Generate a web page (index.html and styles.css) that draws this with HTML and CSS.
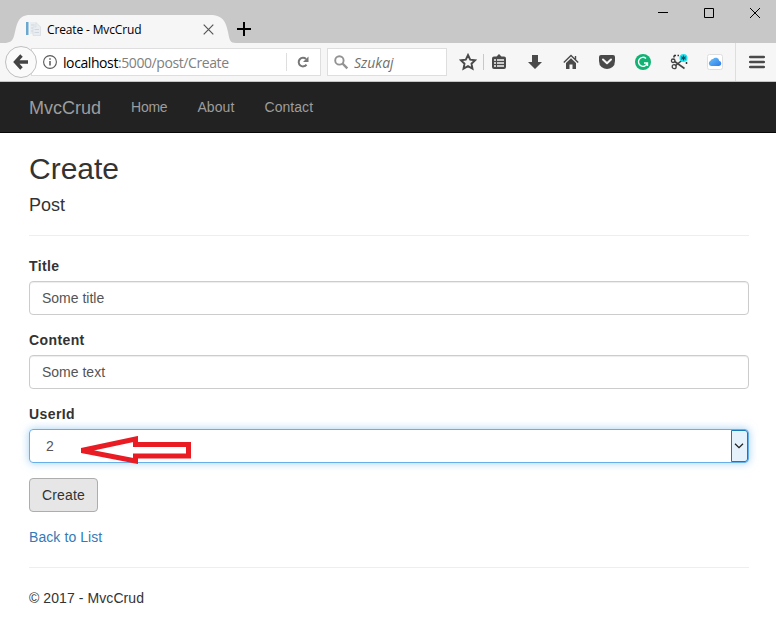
FILE: index.html
```html
<!DOCTYPE html>
<html lang="en">
<head>
<meta charset="utf-8">
<title>Create - MvcCrud</title>
<link rel="stylesheet" href="styles.css">
</head>
<body>
<div class="titlebar">
  <div class="tab">
    <svg class="tab-shape" width="232" height="28" viewBox="0 0 232 28"><path d="M0 28C6 28 8.500 26 10 21C13 10 13 0 26 0H206C219 0 222 7 224 17C225.500 25 226 28 232 28Z" fill="#f6f6f6"/></svg>
    <svg class="favicon" width="16" height="16" viewBox="0 0 16 16"><path d="M1 1H3.500V14H1Z" fill="#6ba8cf"/><path d="M5 1H10.500L15.500 5.500V14.500H8V13H5Z" fill="#e9edf1"/><path d="M6 4H9.500M6 7H8M6 10H8M9.500 8.500H14M9.500 11.500H14" stroke="#cfd7de"/><path d="M8 14.500V6H11V1.500L15.500 6V14.500Z" fill="none" stroke="#d5dbe0" stroke-width=".7"/></svg>
    <span class="tab-title">Create - MvcCrud</span>
    <svg class="tab-close" width="11" height="11" viewBox="0 0 11 11"><path d="M.7 .7L10.300 10.300M10.300 .7L.7 10.300" stroke="#555" stroke-width="1.200"/></svg>
  </div>
  <svg class="new-tab" width="14" height="14" viewBox="0 0 14 14"><path d="M7 0V14M0 7H14" stroke="#000" stroke-width="2"/></svg>
  <div class="window-controls">
    <svg width="10" height="10" viewBox="0 0 10 10"><path d="M0 4.500H10" stroke="#000"/></svg>
    <svg width="10" height="10" viewBox="0 0 10 10"><path d="M.5 .5H9.500V9.500H.5Z" fill="none" stroke="#000"/></svg>
    <svg width="10" height="10" viewBox="0 0 10 10"><path d="M0 0L10 10M10 0L0 10" stroke="#000"/></svg>
  </div>
</div>

<div class="toolbar">
  <div class="back"><svg width="16" height="16" viewBox="0 0 16 16"><path d="M8.500 1.500L2.500 8L8.500 14.500M3 8H15" fill="none" stroke="#444" stroke-width="3.400"/></svg></div>
  <div class="address">
    <svg width="14" height="14" viewBox="0 0 14 14"><circle cx="7" cy="7" r="6.400" fill="none" stroke="#5a5a5a" stroke-width="1.100"/><path d="M7 6V10.500M7 3.200V4.800" stroke="#5a5a5a" stroke-width="1.500"/></svg>
    <span class="url">localhost<span class="path">:5000/post/Create</span></span>
    <div class="reload"><svg width="12" height="12" viewBox="0 0 12 12"><path d="M9.500 8.600A4.300 4.300 0 1 1 9 3" fill="none" stroke="#777" stroke-width="2"/><path d="M11.500 .5V6H6Z" fill="#777"/></svg></div>
  </div>
  <div class="search">
    <svg width="15" height="15" viewBox="0 0 15 15"><circle cx="5.400" cy="5.400" r="4.200" fill="none" stroke="#929292" stroke-width="1.900"/><path d="M8.500 8.500L13.300 13.300" stroke="#929292" stroke-width="2.400"/></svg>
    <span>Szukaj</span>
  </div>
  <div class="icons">
    <div class="icon star"><svg width="18" height="18" viewBox="0 0 18 18"><path d="M9 2L11.200 6.600L16.200 7.200L12.500 10.700L13.500 15.700L9 13.200L4.500 15.700L5.500 10.700L1.800 7.200L6.800 6.600Z" fill="none" stroke="#4a4a4a" stroke-width="1.900"/></svg></div>
    <div class="icon clip"><svg width="16" height="16" viewBox="0 0 16 16"><path d="M3 2.500H5.500L8 0L10.500 2.500H13Q15 2.500 15 4.500V13Q15 15 13 15H3Q1 15 1 13V4.500Q1 2.500 3 2.500Z" fill="#4a4a4a"/><path d="M3 6H5M6 6H13M3 9H5M6 9H13M3 12H5M6 12H13" stroke="#f6f6f6" stroke-width="1.500"/></svg></div>
    <div class="icon"><svg width="16" height="16" viewBox="0 0 16 16"><path d="M5 1H11V8H15L8 15L1 8H5Z" fill="#4a4a4a"/></svg></div>
    <div class="icon"><svg width="16" height="16" viewBox="0 0 16 16"><path d="M.8 8.500L8 1.500L15.200 8.500M12.500 2V6" fill="none" stroke="#4a4a4a" stroke-width="1.400"/><path d="M3 9L8 4.300L13 9V15H9.500V10.500H6.500V15H3Z" fill="#4a4a4a"/></svg></div>
    <div class="icon"><svg width="16" height="16" viewBox="0 0 16 16"><path d="M2 1H14Q16 1 16 3V7Q16 11 13.500 13Q8 17 2.500 13Q0 11 0 7V3Q0 1 2 1Z" fill="#4a4a4a"/><path d="M4 5.500L8 9.300L12 5.500" fill="none" stroke="#f6f6f6" stroke-width="2" stroke-linecap="round" stroke-linejoin="round"/></svg></div>
    <div class="icon"><svg width="16" height="16" viewBox="0 0 16 16"><circle cx="8" cy="8" r="8" fill="#11b274"/><path d="M11 4.500A4.500 4.500 0 1 0 12.300 9H9M12.500 8.500V12" fill="none" stroke="#fff" stroke-width="1.400"/></svg></div>
    <div class="icon"><svg width="18" height="16" viewBox="0 0 18 16"><path d="M4 1.500H9M4 1.500V6M16.500 8V11" fill="none" stroke="#333" stroke-width="1.500" stroke-dasharray="2 1.500"/><path d="M4 7L14.500 14.500M5 12L13 5.500" stroke="#444" stroke-width="1.600"/><circle cx="3.200" cy="6.800" r="1.800" fill="none" stroke="#444" stroke-width="1.300"/><circle cx="4.200" cy="12.700" r="2" fill="none" stroke="#444" stroke-width="1.300"/><circle cx="13.500" cy="4" r="4" fill="#1de1ee"/><path d="M13.500 1.500V6.500M11.300 2.700L15.700 5.300M15.700 2.700L11.300 5.300" stroke="#124b60" stroke-width="1.100"/></svg></div>
    <div class="icon"><svg width="16" height="16" viewBox="0 0 16 16"><defs><linearGradient id="sky" x2="1" y2="1"><stop stop-color="#6bc3f8"/><stop offset="1" stop-color="#2d7bea"/></linearGradient></defs><rect x=".5" y=".5" width="15" height="15" rx="2" fill="#fff" stroke="#dedede"/><path d="M4.500 12A2.700 2.700 0 0 1 3.500 6.800A2.500 2.500 0 0 1 6 5A3.500 3.500 0 0 1 12.200 6.700A2.700 2.700 0 0 1 12 12Z" fill="url(#sky)"/></svg></div>
    <div class="icon menu"><svg width="16" height="14" viewBox="0 0 16 14"><path d="M1.200 2H14.800M1.200 7H14.800M1.200 12H14.800" stroke="#4a4a4a" stroke-width="2.600" stroke-linecap="round"/></svg></div>
  </div>
</div>

<nav class="navbar">
  <a class="brand">MvcCrud</a>
  <a>Home</a>
  <a class="about">About</a>
  <a class="contact">Contact</a>
</nav>

<main class="content">
  <h2>Create</h2>
  <h4>Post</h4>
  <hr>
  <form>
    <div class="group">
      <label>Title</label>
      <div class="control">Some title</div>
    </div>
    <div class="group">
      <label>Content</label>
      <div class="control">Some text</div>
    </div>
    <div class="group">
      <label>UserId</label>
      <div class="control select">
        <span>2</span>
        <div class="drop"><svg width="10" height="6" viewBox="0 0 10 6"><path d="M1 .8L5 4.700L9 .8" fill="none" stroke="#222" stroke-width="1.300"/></svg></div>
        <svg class="arrow" width="114" height="28" viewBox="-2 0 114 28"><path d="M1.500 14.500L55.500 3V8.500H108.500V20H55.500V25Z" fill="none" stroke="#e91c24" stroke-width="5"/></svg>
      </div>
    </div>
    <button type="button">Create</button>
  </form>
  <a class="link">Back to List</a>
  <hr>
  <footer>© 2017 - MvcCrud</footer>
</main>
</body>
</html>
```

FILE: styles.css
```css
* { box-sizing: border-box; }

body {
  margin: 0;
  height: 620px;
  overflow: hidden;
  background: #fff;
  color: #333;
  font: 14px/20px "Liberation Sans", Arial, sans-serif;
}

svg { display: block; flex: none; }

/* Window title bar */
.titlebar {
  display: flex;
  height: 43px;
  padding-left: 4px;
  background: #c8c8c8;
}

.tab {
  position: relative;
  display: flex;
  align-items: center;
  width: 232px;
  height: 28px;
  margin-top: 15px;
  padding: 0 18px 0 21px;
}

.tab-shape { position: absolute; left: 0; top: 0; }
.favicon, .tab-title, .tab-close { position: relative; }

.tab-title {
  margin-left: 6px;
  padding-top: 1px;
  color: #000;
  font: 12px/28px "Open Sans", sans-serif;
  letter-spacing: -0.14px;
  white-space: nowrap;
}

.tab-close { margin-left: auto; margin-right: 4px; }
.new-tab { margin: 22px 0 0 1px; }

.window-controls {
  display: flex;
  gap: 36px;
  margin: 8px 16px 0 auto;
}

/* Browser toolbar */
.toolbar {
  display: flex;
  align-items: center;
  height: 39px;
  padding-left: 5px;
  background: #f6f6f6;
  border-bottom: 1px solid #c3c6c6;
}

.back {
  position: relative;
  display: flex;
  align-items: center;
  justify-content: center;
  flex: none;
  width: 32px;
  height: 32px;
  border: 1px solid #bfbfbf;
  border-radius: 50%;
  background: #fafafa;
}

.address {
  display: flex;
  align-items: center;
  flex: none;
  width: 290px;
  height: 28px;
  margin-left: -6px;
  padding-left: 11px;
  border: 1px solid #dedede;
  background: #fff;
}

.url, .search {
  font: 14px/26px "Open Sans", sans-serif;
}

.url {
  margin-left: 6px;
  padding-top: 1px;
  color: #000;
  letter-spacing: -0.41px;
  white-space: nowrap;
}

.path { color: #808080; }

.reload {
  display: flex;
  align-items: center;
  justify-content: center;
  width: 34px;
  height: 18px;
  margin-left: auto;
  padding-right: 2px;
  border-left: 1px solid #dedede;
}

.search {
  display: flex;
  align-items: center;
  flex: none;
  gap: 5px;
  width: 120px;
  height: 28px;
  margin-left: 6px;
  padding-left: 6px;
  border: 1px solid #dedede;
  background: #fff;
  color: #707070;
  font-style: italic;
}

.search span { padding-top: 1px; }

.icons { display: flex; flex: none; height: 38px; padding-left: 3px; }

.icon {
  display: flex;
  align-items: center;
  justify-content: center;
  width: 36px;
  height: 38px;
}

.star { position: relative; }

.star::after {
  content: "";
  position: absolute;
  right: 2px;
  top: 11px;
  width: 1px;
  height: 16px;
  background: #c8c8c8;
}

.clip { width: 30px; margin-right: 1px; }
.star + .clip { padding-right: 4px; }
.menu { width: 43px; margin-left: 2px; border-left: 1px solid #dedede; }

/* Site navigation */
.navbar {
  display: flex;
  height: 51px;
  padding-left: 14px;
  background: #222;
  border-bottom: 1px solid #080808;
}

.navbar a { padding: 15px; color: #9d9d9d; letter-spacing: -0.25px; }
.navbar .brand { padding-top: 16px; font-size: 18px; letter-spacing: 0; }
.navbar .about { letter-spacing: 0.1px; }
.navbar .contact { letter-spacing: 0.05px; }

/* Page body */
.content { width: 720px; margin: 19px 0 0 29px; }

h2, h4 { margin: 0; font-weight: 400; }
h2 { font-size: 30px; line-height: 33px; }
h4 { margin-top: 10px; font-size: 18px; line-height: 20px; }

hr {
  height: 1px;
  margin: 20px 0;
  border: 0;
  background: #eee;
}

.group { margin-bottom: 15px; }

label {
  display: block;
  margin-bottom: 5px;
  font-weight: 700;
  letter-spacing: 0.4px;
}

.control {
  height: 34px;
  padding: 6px 12px;
  border: 1px solid #ccc;
  border-radius: 4px;
  box-shadow: inset 0 1px 1px rgba(0, 0, 0, .075);
  color: #555;
}

.select {
  position: relative;
  display: flex;
  justify-content: space-between;
  padding: 0 0 0 16px;
  border-color: #66afe9;
  box-shadow: 0 0 8px rgba(102, 175, 233, .6);
  line-height: 32px;
}

.drop {
  display: flex;
  align-items: center;
  justify-content: center;
  width: 17px;
  height: 32px;
  padding-right: 1px;
  border: 1px solid #1879b8;
  border-radius: 0 3px 3px 0;
  background: #e5f1fb;
}

.arrow { position: absolute; left: 48px; top: 6px; }

button {
  display: block;
  width: 69px;
  height: 34px;
  padding: 6px 0;
  border: 1px solid #adadad;
  border-radius: 4px;
  background: #e6e6e6;
  color: #333;
  font: inherit;
  letter-spacing: 0.15px;
}

.link { display: block; margin-top: 15px; color: #337ab7; letter-spacing: 0.08px; }
footer { letter-spacing: 0.08px; }
```
